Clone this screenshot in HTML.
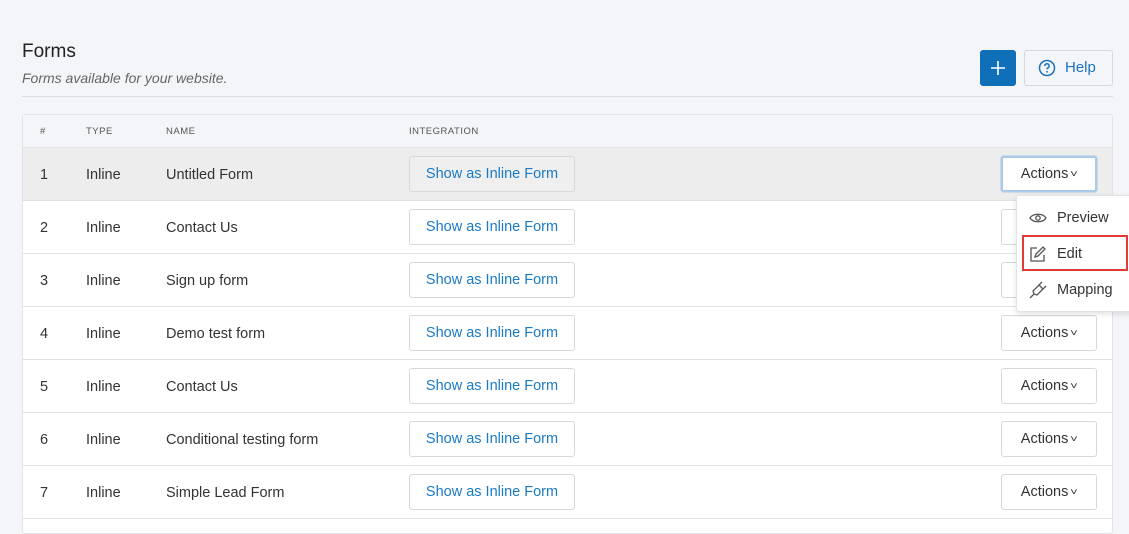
<!DOCTYPE html>
<html><head><style>
*{box-sizing:border-box;margin:0;padding:0}
body{width:1129px;height:521px;overflow:hidden;background:#f4f5f8;font-family:"Liberation Sans",sans-serif;color:#333;position:relative}
.abs{position:absolute}
h1{position:absolute;left:22px;top:41px;font-size:19px;font-weight:normal;color:#222}
.sub{left:22px;top:70px;font-size:14px;font-style:italic;color:#666}
.hr{left:22px;top:96px;width:1091px;height:1px;background:#dcdde0}
.plus{left:980px;top:50px;width:36px;height:36px;background:#0f6fb8;border-radius:3px}
.help{left:1024px;top:50px;width:89px;height:36px;border:1px solid #d6d8dc;border-radius:3px;background:#f4f5f8;color:#1a73c0;font-size:15px;line-height:34px;padding-left:40px}
.table{left:22px;top:114px;width:1091px;height:420px;border:1px solid #e2e3e6;background:#fff;border-radius:3px}
.th{position:absolute;top:0;height:33px;width:100%;background:#f4f5f8;border-bottom:1px solid #e2e3e6;font-size:9.5px;color:#555;letter-spacing:.5px}
.th span{position:absolute;top:11px}
.row{position:absolute;left:0;width:100%;height:53px;border-bottom:1px solid #e2e3e6;font-size:14.5px;color:#333}
.row span{position:absolute;top:19px}
.btn{position:absolute;left:386px;top:8px;width:166px;height:36px;border:1px solid #d6d8dc;border-radius:3px;color:#1a7bc4;font-size:14.5px;text-align:center;line-height:34px;background:#fff}
.act{position:absolute;left:978px;top:8px;width:96px;height:36px;border:1px solid #d6d8dc;border-radius:3px;font-size:14.5px;text-align:center;line-height:34px;background:#fff;color:#333}
.act i{font-style:normal;font-size:10px;display:inline-block;transform:scaleX(1.3);margin-left:3px;vertical-align:1px}
.menu{left:1016px;top:195px;width:120px;height:117px;background:#fff;border:1px solid #e2e3e6;border-radius:3px;box-shadow:0 2px 6px rgba(0,0,0,.12)}
.mi{position:absolute;left:40px;font-size:14.5px;color:#333}
.ic{position:absolute;left:12px}
</style></head><body>
<h1>Forms</h1>
<div class="abs sub">Forms available for your website.</div>
<div class="abs hr"></div>
<div class="abs plus"><svg width="36" height="36"><path d="M18 11v14M11 18h14" stroke="#fff" stroke-width="1.6"/></svg></div>
<div class="abs help"><svg class="abs" style="left:13px;top:8px" width="18" height="18" viewBox="0 0 18 18"><circle cx="9" cy="9" r="7.5" fill="none" stroke="#1a73c0" stroke-width="1.5"/><path d="M6.8 7a2.2 2.2 0 1 1 3 2c-.7.3-.8.7-.8 1.3" fill="none" stroke="#1a73c0" stroke-width="1.5"/><circle cx="9" cy="12.8" r=".9" fill="#1a73c0"/></svg>Help</div>
<div class="abs table">
<div class="th"><span style="left:17px">#</span><span style="left:63px">TYPE</span><span style="left:143px">NAME</span><span style="left:386px">INTEGRATION</span></div>
<div class="row" style="top:33px;background:#ededed"><span style="left:17px">1</span><span style="left:63px">Inline</span><span style="left:143px">Untitled Form</span><div class="btn" style="background:#efefef">Show as Inline Form</div><div class="act" style="border:2px solid #a9c9e6;box-shadow:0 0 0 1px #c9dbea;line-height:32px">Actions<i>˅</i></div></div>
<div class="row" style="top:86px"><span style="left:17px">2</span><span style="left:63px">Inline</span><span style="left:143px">Contact Us</span><div class="btn">Show as Inline Form</div><div class="act">Actions<i>˅</i></div></div>
<div class="row" style="top:139px"><span style="left:17px">3</span><span style="left:63px">Inline</span><span style="left:143px">Sign up form</span><div class="btn">Show as Inline Form</div><div class="act">Actions<i>˅</i></div></div>
<div class="row" style="top:192px"><span style="left:17px">4</span><span style="left:63px">Inline</span><span style="left:143px">Demo test form</span><div class="btn">Show as Inline Form</div><div class="act">Actions<i>˅</i></div></div>
<div class="row" style="top:245px"><span style="left:17px">5</span><span style="left:63px">Inline</span><span style="left:143px">Contact Us</span><div class="btn">Show as Inline Form</div><div class="act">Actions<i>˅</i></div></div>
<div class="row" style="top:298px"><span style="left:17px">6</span><span style="left:63px">Inline</span><span style="left:143px">Conditional testing form</span><div class="btn">Show as Inline Form</div><div class="act">Actions<i>˅</i></div></div>
<div class="row" style="top:351px"><span style="left:17px">7</span><span style="left:63px">Inline</span><span style="left:143px">Simple Lead Form</span><div class="btn">Show as Inline Form</div><div class="act">Actions<i>˅</i></div></div>
</div>
<div class="abs menu">
<svg class="ic" style="top:15px" width="18" height="14" viewBox="0 0 18 14"><path d="M1 7C4 2 14 2 17 7C14 12 4 12 1 7Z" fill="none" stroke="#555" stroke-width="1.3"/><circle cx="9" cy="7" r="2.2" fill="none" stroke="#555" stroke-width="1.3"/></svg>
<div class="mi" style="top:14px">Preview</div>
<div class="abs" style="left:5px;top:39px;width:106px;height:36px;border:2px solid #e53935"></div>
<svg class="ic" style="top:49px" width="18" height="18" viewBox="0 0 18 18"><path d="M8 3H2v13h13v-6" fill="none" stroke="#555" stroke-width="1.3"/><path d="M6 12l1-3 7-7 2 2-7 7z" fill="none" stroke="#555" stroke-width="1.3"/></svg>
<div class="mi" style="top:50px">Edit</div>
<svg class="ic" style="top:85px" width="18" height="18" viewBox="0 0 18 18"><path d="M1 17l4-4M5 13l-1-3 6-6 4 4-6 6zM10 4l3-3M14 8l3-3" fill="none" stroke="#555" stroke-width="1.3"/></svg>
<div class="mi" style="top:86px">Mapping</div>
</div>
</body></html>
